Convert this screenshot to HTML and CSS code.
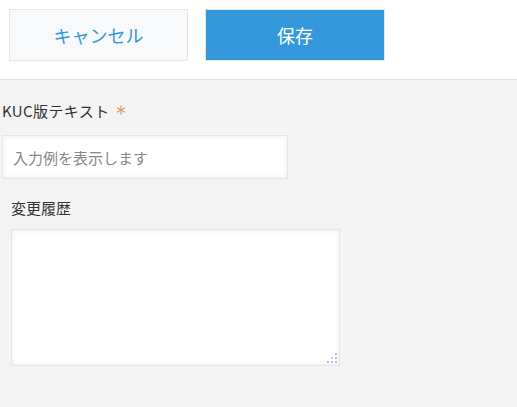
FILE: index.html
```
<!DOCTYPE html>
<html lang="ja">
<head>
    <meta charset="UTF-8">
    <meta name="viewport" content="width=device-width, initial-scale=1.0">
    <title>レコード編集</title>
    <link rel="stylesheet" href="styles.css">
</head>
<body>

    <div class="toolbar">
        <button class="btn btn-cancel">キャンセル</button>
        <button class="btn btn-save">保存</button>
    </div>

    <div class="record">
        <div class="field field-kuc">
            <div class="field-label">
                KUC版テキスト
                <!-- 必須マーク -->
                <svg class="required" width="10" height="10" viewBox="0 0 10 10">
                    <g stroke="#e39a66" stroke-width="1.2" stroke-linecap="round">
                        <line x1="5" y1="0.8" x2="5" y2="9.2"/>
                        <line x1="1.4" y1="2.9" x2="8.6" y2="7.1"/>
                        <line x1="1.4" y1="7.1" x2="8.6" y2="2.9"/>
                    </g>
                </svg>
            </div>
            <input type="text" class="text-input" placeholder="入力例を表示します">
        </div>

        <div class="field field-history">
            <div class="field-label">変更履歴</div>
            <div class="textarea-wrap">
                <textarea class="text-area"></textarea>
                <!-- リサイズ用のつまみ -->
                <svg class="grip" width="12" height="12" viewBox="0 0 12 12">
                    <rect x="9" y="1" width="2" height="2" fill="#a9c1ec"/>
                    <rect x="5" y="5" width="2" height="2" fill="#c9c3df"/>
                    <rect x="9" y="5" width="2" height="2" fill="#a9c1ec"/>
                    <rect x="1" y="9" width="2" height="2" fill="#a9c1ec"/>
                    <rect x="5" y="9" width="2" height="2" fill="#b9c3e6"/>
                    <rect x="9" y="9" width="2" height="2" fill="#a9c1ec"/>
                </svg>
            </div>
        </div>
    </div>

</body>
</html>
```

FILE: styles.css
```
body {
    margin: 0;
    font-family: "Noto Sans CJK JP", "Noto Sans", sans-serif;
    background-color: #f4f4f4;
    color: #333;
}
.toolbar {
    display: flex;
    gap: 17px;
    height: 80px;
    box-sizing: border-box;
    padding: 9px 0 0 9px;
    background: #fff;
    border-bottom: 1px solid #e3e3e3;
}
.btn {
    height: 52px;
    border: 1px solid #e3e7e8;
    font-family: inherit;
    font-size: 18px;
    cursor: pointer;
    padding: 0;
}
.btn-cancel {
    width: 179px;
    background: #f7f9fa;
    color: #3498db;
}
.btn-save {
    width: 180px;
    background: #3498db;
    color: #fff;
}
.field-label {
    font-size: 15px;
    line-height: 20px;
    height: 20px;
}
.field-kuc {
    padding: 21px 0 0 2px;
}
.field-kuc .field-label {
    display: flex;
    align-items: flex-start;
    gap: 6px;
    letter-spacing: 0.4px;
}
.required {
    margin-top: 4px;
}
.text-input {
    display: block;
    margin-top: 14px;
    width: 286px;
    height: 44px;
    box-sizing: border-box;
    padding: 0 10px;
    border: 1px solid #e3e7e8;
    background: #fff;
    box-shadow: 2px 2px 4px #f5f5f5 inset, -2px -2px 4px #f5f5f5 inset;
    font-family: inherit;
    font-size: 15px;
    color: #333;
    outline: none;
}
.text-input::placeholder {
    color: #888;
}
.field-history {
    padding: 19px 0 0 11px;
}
.textarea-wrap {
    position: relative;
    margin-top: 11px;
    width: 329px;
    height: 137px;
}
.text-area {
    display: block;
    width: 100%;
    height: 100%;
    box-sizing: border-box;
    border: 1px solid #e3e7e8;
    background: #fff;
    box-shadow: 2px 2px 4px #f5f5f5 inset, -2px -2px 4px #f5f5f5 inset;
    resize: none;
    outline: none;
}
.grip {
    position: absolute;
    right: 2px;
    bottom: 2px;
}
```
